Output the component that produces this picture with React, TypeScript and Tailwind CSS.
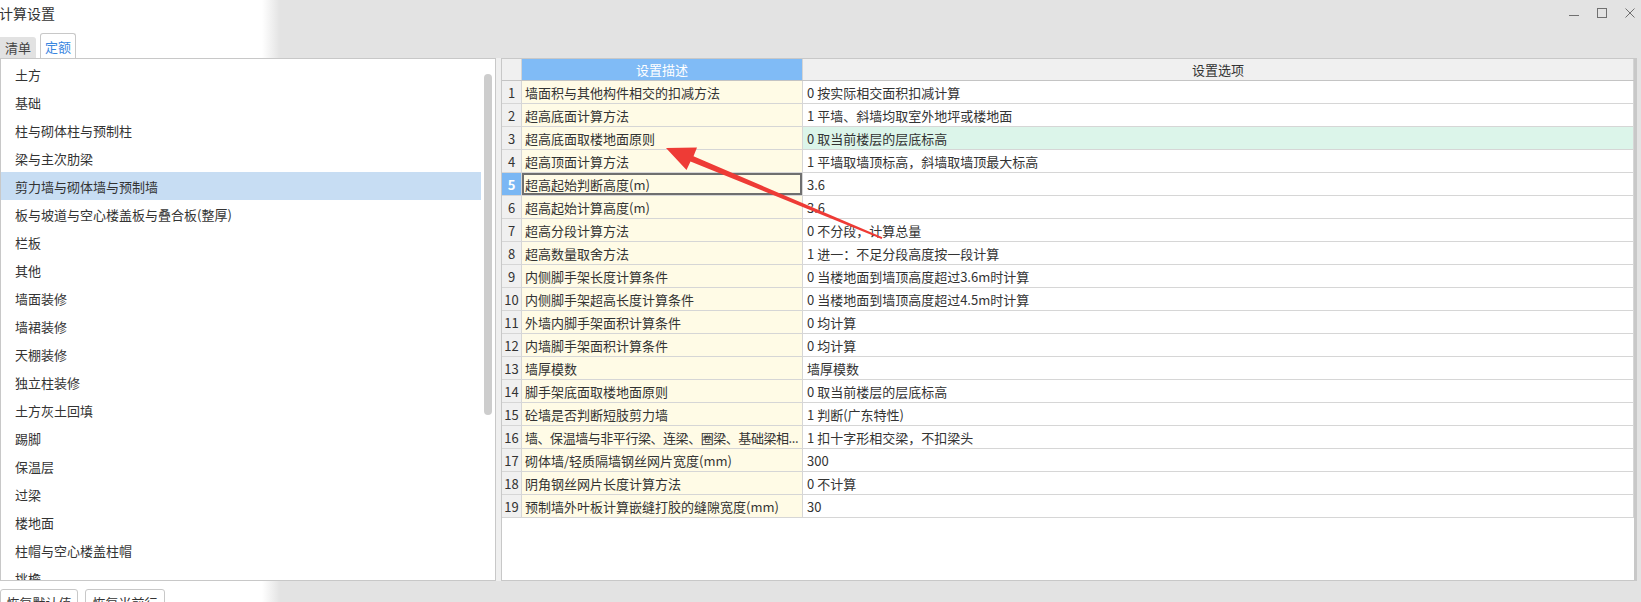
import React from 'react';

const categories = [
    '土方',
    '基础',
    '柱与砌体柱与预制柱',
    '梁与主次肋梁',
    '剪力墙与砌体墙与预制墙',
    '板与坡道与空心楼盖板与叠合板(整厚)',
    '栏板',
    '其他',
    '墙面装修',
    '墙裙装修',
    '天棚装修',
    '独立柱装修',
    '土方灰土回填',
    '踢脚',
    '保温层',
    '过梁',
    '楼地面',
    '柱帽与空心楼盖柱帽',
    '挑檐',
];

const settings: [string, string][] = [
    ['墙面积与其他构件相交的扣减方法', '0 按实际相交面积扣减计算'],
    ['超高底面计算方法', '1 平墙、斜墙均取室外地坪或楼地面'],
    ['超高底面取楼地面原则', '0 取当前楼层的层底标高'],
    ['超高顶面计算方法', '1 平墙取墙顶标高，斜墙取墙顶最大标高'],
    ['超高起始判断高度(m)', '3.6'],
    ['超高起始计算高度(m)', '3.6'],
    ['超高分段计算方法', '0 不分段，计算总量'],
    ['超高数量取舍方法', '1 进一：不足分段高度按一段计算'],
    ['内侧脚手架长度计算条件', '0 当楼地面到墙顶高度超过3.6m时计算'],
    ['内侧脚手架超高长度计算条件', '0 当楼地面到墙顶高度超过4.5m时计算'],
    ['外墙内脚手架面积计算条件', '0 均计算'],
    ['内墙脚手架面积计算条件', '0 均计算'],
    ['墙厚模数', '墙厚模数'],
    ['脚手架底面取楼地面原则', '0 取当前楼层的层底标高'],
    ['砼墙是否判断短肢剪力墙', '1 判断(广东特性)'],
    ['墙、保温墙与非平行梁、连梁、圈梁、基础梁相...', '1 扣十字形相交梁，不扣梁头'],
    ['砌体墙/轻质隔墙钢丝网片宽度(mm)', '300'],
    ['阴角钢丝网片长度计算方法', '0 不计算'],
    ['预制墙外叶板计算嵌缝打胶的缝隙宽度(mm)', '30'],
];

const selectedCategory = 4;
const activeRow = 5;
const highlightRow = 3;
// row 16's text is already cut by the grid, squeeze it a little so it fits
const tightRow = 16;

const WindowControls: React.FC = () => (
    <div className="flex items-center gap-[18px] pr-[6px] text-[#707070]">
        <svg width="10" height="10" viewBox="0 0 10 10">
            <line x1="0" y1="7.5" x2="10" y2="7.5" stroke="currentColor" strokeWidth="1" />
        </svg>
        <svg width="10" height="10" viewBox="0 0 10 10">
            <rect x="0.5" y="0.5" width="9" height="9" fill="none" stroke="currentColor" strokeWidth="1" />
        </svg>
        <svg width="10" height="10" viewBox="0 0 10 10">
            <path d="M0.5 0.5 L9.5 9.5 M9.5 0.5 L0.5 9.5" stroke="currentColor" strokeWidth="1" />
        </svg>
    </div>
);

const Arrow: React.FC = () => (
    <svg className="absolute inset-0 pointer-events-none" width="1641" height="602" viewBox="0 0 1641 602">
        <polygon
            points="666,148 697,147.5 693.5,156.3 882.4,237.3 881.6,239 690.5,161.5 686.5,170"
            fill="#ee3b36"
        />
    </svg>
);

export default function App() {
    return (
        <div className="relative w-[1641px] h-[602px] overflow-hidden bg-[linear-gradient(to_right,#ffffff_262px,#e3e3e3_280px)] font-['Noto_Sans_CJK_SC','Noto_Sans',sans-serif] text-[13px] text-[#333]">
            {/* title bar */}
            <div className="flex items-center justify-between h-[26px]">
                <span className="-ml-px text-[14px] leading-none text-[#333]">计算设置</span>
                <WindowControls />
            </div>

            {/* tabs */}
            <div className="flex items-end h-[32px]">
                <div className="flex items-center justify-center w-[36px] h-[21px] bg-[#e2e2e2] rounded-tr-[3px] text-[#444] leading-none">清单</div>
                <div className="flex items-center justify-center ml-[4px] w-[36px] h-[25px] bg-white border border-b-0 border-[#c8c8c8] rounded-t-[3px] text-[#3a86df] leading-none">定额</div>
            </div>

            {/* panels */}
            <div className="flex h-[523px]">
                <div className="flex w-[496px] bg-white border border-[#c8c8c8] overflow-hidden">
                    <div className="w-[480px] pt-[1px] overflow-hidden">
                        {categories.map((name, i) => (
                            <div
                                key={name}
                                className={`flex items-center h-[28px] pl-[14px] leading-none whitespace-nowrap ${i === selectedCategory ? 'bg-[#c7ddf3]' : ''}`}
                            >
                                {name}
                            </div>
                        ))}
                    </div>
                    <div className="flex-1 pt-[15px] pl-[3px]">
                        <div className="w-[8px] h-[341px] rounded-full bg-[#cdcdcd]" />
                    </div>
                </div>

                <div className="w-[5px] bg-[#efefef]" />

                <div className="flex flex-col w-[1136px] bg-white border border-r-[3px] border-[#c8c8c8]">
                    <div className="flex h-[22px] bg-[#f0f0f0] border-b border-[#c4c4c4] leading-none">
                        <div className="w-[20px] border-r border-[#d4d4d4]" />
                        <div className="flex items-center justify-center w-[281px] bg-[#80bbf6] text-white border-r border-[#d4d4d4]">设置描述</div>
                        <div className="flex items-center justify-center flex-1 text-[#333] border-r border-[#d4d4d4]">设置选项</div>
                    </div>
                    {settings.map(([desc, option], i) => {
                        const n = i + 1;
                        return (
                            <div key={n} className="flex h-[23px] border-b border-[#d6d6d6] leading-none">
                                <div
                                    className={`flex items-center justify-center w-[20px] border-r border-[#d6d6d6] ${n === activeRow ? 'bg-[#7ab7f4] text-white font-bold' : 'bg-[#f0f0f0] text-[#333]'}`}
                                >
                                    {n}
                                </div>
                                <div
                                    className={`flex items-center w-[281px] pl-[3px] bg-[#fffbe6] border-r border-[#d6d6d6] whitespace-nowrap overflow-hidden ${n === activeRow ? 'shadow-[inset_0_0_0_2px_#6f6f6f]' : ''} ${n === tightRow ? 'tracking-[-0.45px]' : ''}`}
                                >
                                    {desc}
                                </div>
                                <div
                                    className={`flex items-center flex-1 pl-[4px] border-r border-[#d6d6d6] whitespace-nowrap ${n === highlightRow ? 'bg-[#dcf5ea]' : ''}`}
                                >
                                    {option}
                                </div>
                            </div>
                        );
                    })}
                </div>
            </div>

            {/* bottom buttons */}
            <div className="flex gap-[7px] mt-[8px]">
                <div className="flex items-center justify-center w-[78px] h-[26px] bg-white border border-[#c8c8c8] rounded-[3px] leading-none">恢复默认值</div>
                <div className="flex items-center justify-center w-[80px] h-[26px] bg-white border border-[#c8c8c8] rounded-[3px] leading-none">恢复当前行</div>
            </div>

            <Arrow />
        </div>
    );
}
